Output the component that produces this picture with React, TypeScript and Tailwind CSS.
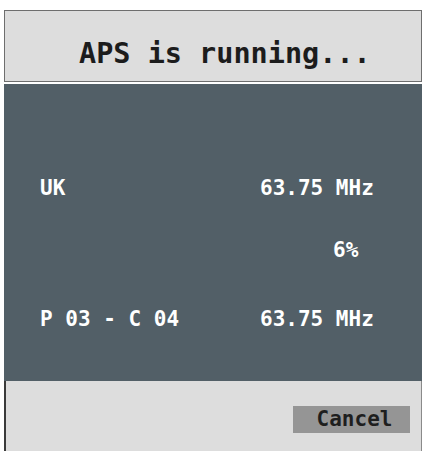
export default function App() {
  const rows = [
    { left: 'UK', right: '63.75 MHz' },
    { left: '', right: '6%' },
    { left: 'P 03 - C 04', right: '63.75 MHz' },
  ];

  return (
    <div className="w-[425px] h-[451px] overflow-hidden bg-white pt-[10px] pl-[4px] pr-[3px] font-['DejaVu_Sans_Mono',monospace] font-bold">
      {/* Title bar */}
      <div className="h-[72px] border border-[#6e6e6e] bg-[#dddddd] pl-[74px] pt-[29px]">
        <h1 className="text-[28.5px] leading-none text-[#1c1c1c]">APS is running...</h1>
      </div>

      {/* Status panel */}
      <div className="mt-[2px] h-[297px] bg-[#525f67] pl-[36px] pt-[94px] text-[21px] leading-none text-white">
        <div className="grid grid-cols-[220px_1fr]">
          <span>{rows[0].left}</span>
          <span>{rows[0].right}</span>
        </div>
        <div className="mt-[41px] grid grid-cols-[220px_1fr]">
          <span>{rows[1].left}</span>
          <span className="pl-[73px]">{rows[1].right}</span>
        </div>
        <div className="mt-[48px] grid grid-cols-[220px_1fr]">
          <span>{rows[2].left}</span>
          <span>{rows[2].right}</span>
        </div>
      </div>

      {/* Footer */}
      <div className="h-[70px] border-l-2 border-r border-l-[#3a3a3a] border-r-[#8a8a8a] bg-[#dddddd] flex justify-end items-start pt-[25px] pr-[11px]">
        <button className="h-[27px] w-[117px] bg-[#959595] text-[21px] leading-none text-[#1e1e1e] pl-[6px]">
          Cancel
        </button>
      </div>
    </div>
  );
}
